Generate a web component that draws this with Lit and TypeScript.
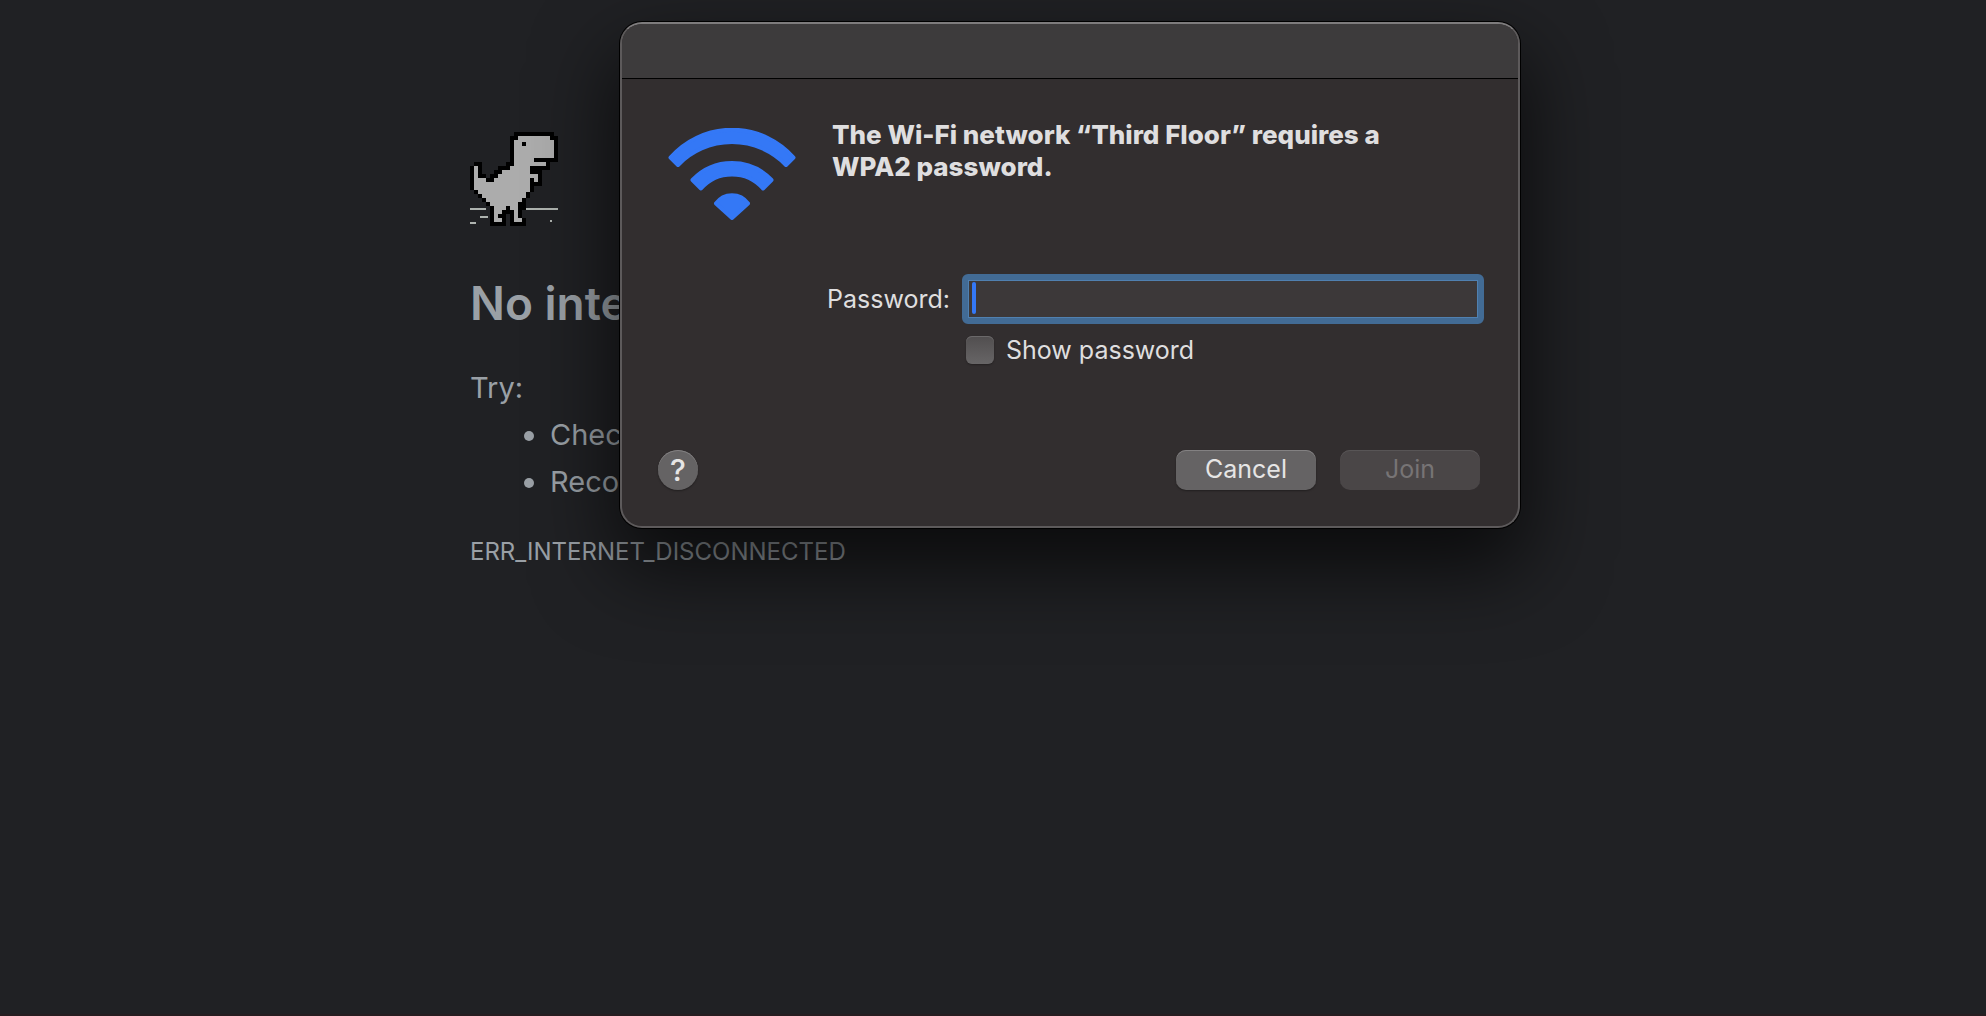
import { LitElement, html, svg, css } from "lit";
import { customElement, state } from "lit/decorators.js";

/** A strip of the pixel drawing: x start, x end, y start, y end. */
type Strip = [number, number, number, number];

const OUTLINE: Strip[] = [
  [22, 42, 0, 2],
  [20, 44, 2, 15],
  [20, 40, 15, 17],
  [18, 22, 15, 17],
  [14, 40, 17, 19],
  [12, 36, 19, 21],
  [10, 36, 21, 25],
  [32, 36, 25, 27],
  [2, 6, 15, 17],
  [0, 6, 17, 21],
  [0, 8, 21, 23],
  [0, 12, 23, 25],
  [0, 32, 25, 29],
  [2, 32, 29, 30],
  [2, 30, 30, 31],
  [4, 30, 31, 33],
  [6, 28, 33, 35],
  [8, 28, 35, 37],
  [10, 28, 37, 39],
  [10, 26, 39, 41],
  [10, 18, 41, 43],
  [20, 26, 41, 43],
  [10, 18, 43, 47],
  [20, 28, 43, 47],
];

const FILL: Strip[] = [
  [24, 40, 2, 4],
  [22, 42, 4, 13],
  [22, 32, 13, 15],
  [22, 38, 15, 17],
  [20, 30, 17, 19],
  [16, 30, 19, 21],
  [14, 34, 21, 23],
  [12, 30, 23, 25],
  [32, 34, 23, 25],
  [2, 4, 17, 23],
  [2, 8, 23, 25],
  [2, 30, 25, 29],
  [4, 30, 29, 30],
  [4, 28, 30, 31],
  [6, 28, 31, 33],
  [8, 26, 33, 35],
  [10, 24, 35, 37],
  [12, 18, 37, 39],
  [20, 24, 37, 39],
  [12, 16, 39, 41],
  [22, 24, 39, 43],
  [12, 14, 41, 43],
  [12, 16, 43, 45],
  [22, 26, 43, 45],
];

const GROUND: Strip[] = [
  [0, 8, 38, 39],
  [28, 44, 38, 39],
  [5, 9, 42, 43],
  [0, 3, 45, 46],
  [40, 41, 44, 45],
];

const toPath = (strips: Strip[]) =>
  strips.map(([x1, x2, y1, y2]) => `M${x1} ${y1}H${x2}V${y2}H${x1}Z`).join("");

@customElement("offline-page")
export class OfflinePage extends LitElement {
  static styles = css`
    :host {
      display: block;
      color: #9aa0a6;
      font-family: Inter, "Liberation Sans", sans-serif;
    }
    .content {
      box-sizing: border-box;
      max-width: 1046px;
      margin: 0 auto;
      padding-top: 132px;
    }
    .dino {
      display: block;
      width: 88px;
      height: 94px;
      shape-rendering: crispEdges;
    }
    .title {
      margin: 48px 0 32px;
      font-size: 46px;
      line-height: 58px;
      font-weight: 600;
    }
    .try,
    .tips {
      margin: 0;
      font-size: 29px;
      line-height: 47px;
    }
    .tips {
      padding-left: 80px;
      list-style: none;
    }
    .tip {
      position: relative;
    }
    .tip::before {
      content: "";
      position: absolute;
      left: -26px;
      top: 20px;
      width: 10px;
      height: 10px;
      border-radius: 50%;
      background: currentColor;
    }
    .code {
      margin: 32px 0 0;
      font-size: 24px;
      line-height: 30px;
    }
  `;

  render() {
    return html`
      <main class="content">
        <svg class="dino" viewBox="0 0 44 47" aria-hidden="true">
          ${svg`
            <path fill="#aeb3af" d=${toPath(GROUND)} />
            <path fill="#000" d=${toPath(OUTLINE)} />
            <path fill="#acacac" d=${toPath(FILL)} />
            <path fill="#000" d="M26 5h2v2h-2z" />
          `}
        </svg>
        <h1 class="title">No internet</h1>
        <p class="try">Try:</p>
        <ul class="tips">
          <li class="tip">Checking the network cables, modem, and router</li>
          <li class="tip">Reconnecting to Wi-Fi</li>
        </ul>
        <p class="code">ERR_INTERNET_DISCONNECTED</p>
      </main>
    `;
  }
}

@customElement("wifi-dialog")
export class WifiDialog extends LitElement {
  @state() private reveal = false;
  @state() private password = "";

  static styles = css`
    :host {
      display: block;
      box-sizing: border-box;
      overflow: hidden;
      border: 2px solid #5d5a5b;
      border-top-color: #7e7c7d;
      border-radius: 22px;
      background: #322e2f;
      color: #dfdedf;
      box-shadow:
        0 0 0 1px #000,
        0 36px 80px 6px rgba(0, 0, 0, 0.66);
      font-family: Inter, "Liberation Sans", sans-serif;
      font-size: 25px;
      line-height: 32px;
    }
    .titlebar {
      height: 54px;
      border-bottom: 1px solid #000;
      background: #3d3b3c;
    }
    .intro {
      display: flex;
      align-items: flex-start;
      gap: 36px;
      padding: 40px 46px 0;
    }
    .wifi {
      flex: none;
      width: 128px;
      height: 92px;
      margin-top: 9px;
    }
    .heading {
      margin: 0;
      max-width: 580px;
      font-size: 26px;
      line-height: 32px;
      font-weight: 800;
    }
    .fields {
      display: grid;
      grid-template-columns: 328px 1fr;
      gap: 12px;
      padding: 54px 34px 0 0;
      align-items: center;
    }
    .label {
      justify-self: end;
    }
    .field {
      position: relative;
    }
    .password {
      display: block;
      box-sizing: border-box;
      width: 100%;
      height: 50px;
      padding: 0 4px;
      border: 6px solid #426b95;
      border-radius: 6px;
      outline: none;
      background: #3c3839;
      box-shadow: inset 0 0 0 1px #5080b0;
      color: inherit;
      font: inherit;
      caret-color: transparent;
    }
    .caret {
      position: absolute;
      left: 10px;
      top: 8px;
      width: 4px;
      height: 32px;
      border-radius: 2px;
      background: #3478f6;
    }
    .show {
      grid-column: 2;
      display: flex;
      align-items: center;
      gap: 12px;
      height: 28px;
      padding-left: 4px;
    }
    .check {
      appearance: none;
      width: 28px;
      height: 28px;
      margin: 0;
      border-radius: 6px;
      background: linear-gradient(#514e4f, #676566);
      box-shadow:
        inset 0 1px 0 #6b696a,
        0 1px 2px rgba(0, 0, 0, 0.3);
    }
    .check:checked {
      background: #3478f6;
    }
    .actions {
      display: flex;
      gap: 24px;
      padding: 86px 38px 36px 36px;
    }
    .button {
      width: 140px;
      height: 40px;
      padding: 0 0 2px;
      border: 0;
      border-radius: 10px;
      background: #656364;
      box-shadow:
        inset 0 1px 0 #838182,
        0 1px 2px rgba(0, 0, 0, 0.35);
      color: #e6e5e5;
      font: inherit;
    }
    .button:disabled {
      background: #4a4647;
      box-shadow: inset 0 1px 0 #585556;
      color: #777475;
    }
    .help {
      width: 40px;
      margin-right: auto;
      padding: 0;
      border-radius: 50%;
      font-size: 30px;
      font-weight: 500;
    }
  `;

  private onInput(e: Event) {
    this.password = (e.target as HTMLInputElement).value;
  }

  private onToggle(e: Event) {
    this.reveal = (e.target as HTMLInputElement).checked;
  }

  render() {
    return html`
      <div class="titlebar"></div>
      <div class="intro">
        <svg class="wifi" viewBox="0 0 128 92" aria-hidden="true">
          <g fill="#3478f6" stroke="#3478f6" stroke-width="4" stroke-linejoin="round">
            <path d="M2.500 29.500A82 82 0 0 1 125.500 29.500L118 37A75 75 0 0 0 10 37Z" />
            <path d="M24.500 52A54.400 54.400 0 0 1 103.500 52L95 60.500A41.300 41.300 0 0 0 33 60.500Z" />
            <path d="M48 75.500A19.500 19.500 0 0 1 80 75.500L64 90Z" />
          </g>
        </svg>
        <h2 class="heading">The Wi-Fi network “Third Floor” requires a WPA2 password.</h2>
      </div>
      <div class="fields">
        <label class="label" for="password">Password:</label>
        <div class="field">
          <input
            class="password"
            id="password"
            type=${this.reveal ? "text" : "password"}
            .value=${this.password}
            @input=${this.onInput}
          />
          ${this.password ? null : html`<span class="caret"></span>`}
        </div>
        <div class="show">
          <input class="check" id="show" type="checkbox" .checked=${this.reveal} @change=${this.onToggle} />
          <label for="show">Show password</label>
        </div>
      </div>
      <div class="actions">
        <button class="button help" type="button">?</button>
        <button class="button" type="button">Cancel</button>
        <button class="button" type="button" ?disabled=${this.password.length < 8}>Join</button>
      </div>
    `;
  }
}

@customElement("app-root")
export class AppRoot extends LitElement {
  static styles = css`
    :host {
      display: block;
      position: relative;
      box-sizing: border-box;
      min-height: 100vh;
      overflow: hidden;
      border-bottom: 2px solid #261d20;
      background: #202124;
    }
    .dialog {
      position: absolute;
      top: 22px;
      left: calc(50% - 373px);
      width: 900px;
    }
  `;

  render() {
    return html`
      <offline-page></offline-page>
      <wifi-dialog class="dialog" role="dialog" aria-label="Wi-Fi"></wifi-dialog>
    `;
  }
}
